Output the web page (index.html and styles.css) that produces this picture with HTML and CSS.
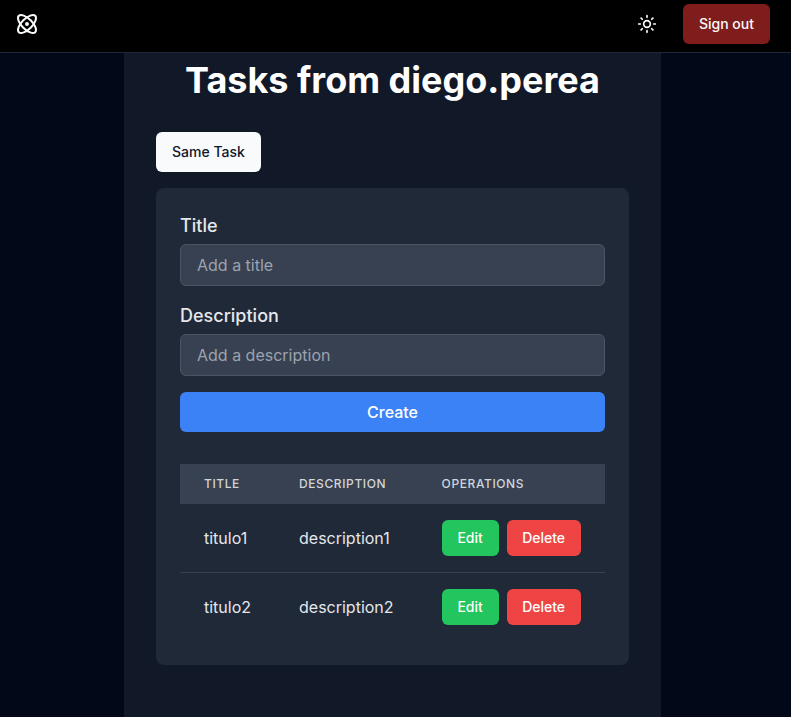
FILE: index.html
```html
<!DOCTYPE html>
<html lang="en">
<head>
<meta charset="utf-8">
<title>Tasks</title>
<link rel="stylesheet" href="styles.css">
</head>
<body>
<header class="topbar">
  <svg class="logo" viewBox="0 0 24 24"><circle cx="12" cy="12" r="1"/><path d="M20.2 20.2c2.04-2.03.02-7.36-4.5-11.9-4.54-4.52-9.87-6.54-11.9-4.5-2.04 2.03-.02 7.36 4.5 11.9 4.54 4.52 9.87 6.54 11.9 4.5Z"/><path d="M15.7 15.7c4.52-4.54 6.54-9.87 4.5-11.9-2.03-2.04-7.36-.02-11.9 4.5-4.52 4.54-6.54 9.87-4.5 11.9 2.03 2.04 7.36.02 11.9-4.5Z"/></svg>
  <div class="actions">
    <button class="theme" aria-label="Theme"><svg viewBox="0 0 24 24"><circle cx="12" cy="12" r="4"/><path d="M12 2v2M12 20v2M4.93 4.93l1.41 1.41M17.66 17.66l1.41 1.41M2 12h2M20 12h2M6.34 17.66l-1.41 1.41M19.07 4.93l-1.41 1.41"/></svg></button>
    <button class="btn signout">Sign out</button>
  </div>
</header>
<main class="page">
  <h1>Tasks from diego.perea</h1>
  <button class="btn same">Same Task</button>
  <section class="card">
    <form>
      <label for="title">Title</label>
      <input id="title" placeholder="Add a title">
      <label for="description">Description</label>
      <input id="description" placeholder="Add a description">
      <button class="create" type="button">Create</button>
    </form>
    <table>
      <thead><tr><th class="c1">Title</th><th class="c2">Description</th><th>Operations</th></tr></thead>
      <tbody>
        <tr><td>titulo1</td><td>description1</td><td><div class="ops"><button class="edit">Edit</button><button class="delete">Delete</button></div></td></tr>
        <tr><td>titulo2</td><td>description2</td><td><div class="ops"><button class="edit">Edit</button><button class="delete">Delete</button></div></td></tr>
      </tbody>
    </table>
  </section>
</main>
</body>
</html>
```
FILE: styles.css
```css
*{box-sizing:border-box;margin:0;padding:0}
body{height:717px;overflow:hidden;display:flex;flex-direction:column;background:#020817;color:#f8fafc;font:16px/24px Inter,sans-serif}
button{border:0;color:#fff;font:inherit;font-weight:500;border-radius:6px}
svg{display:block;fill:none;stroke:currentColor;stroke-width:2;stroke-linecap:round;stroke-linejoin:round}
.topbar{height:53px;flex:none;display:flex;justify-content:space-between;align-items:flex-start;padding:4px 21px 0 15px;background:#000;border-bottom:1px solid #1e293b}
.logo{width:24px;height:24px;margin-top:8px}
.actions{display:flex;gap:16px}
.theme{width:40px;height:40px;background:none;display:grid;place-items:center}
.theme svg{width:20px;height:20px}
.btn{height:40px;padding:0 16px;font-size:14px;line-height:20px}
.signout{background:#7f1d1d;color:#f8fafc}
.page{flex:1;width:537px;margin-left:124px;padding:7px 32px 0;background:#111827}
h1{font-size:36px;line-height:40px;font-weight:700;text-align:center;color:#fff;margin-bottom:32px}
.same{display:block;background:#f8fafc;color:#0f172a;margin-bottom:16px}
.card{background:#1f2937;border-radius:8px;padding:24px;height:477px}
label{display:block;font-size:18px;line-height:28px;font-weight:500;color:#e5e7eb;margin-bottom:4px}
input{display:block;width:100%;height:42px;padding:8px 16px;border:1px solid #4b5563;border-radius:6px;background:#374151;color:#fff;font:inherit;margin-bottom:16px}
input::placeholder{color:#9ca3af;opacity:1}
.create{display:block;width:100%;height:40px;background:#3b82f6;margin-bottom:32px}
table{width:100%;border-collapse:collapse;table-layout:fixed}
th{height:40px;padding:0 0 0 24px;background:#374151;color:#d1d5db;font-size:12px;line-height:16px;font-weight:500;letter-spacing:.6px;text-transform:uppercase;text-align:left}
.c1{width:95px}
.c2{width:142.6px}
td{height:68px;padding:0 0 0 24px;color:#e5e7eb}
tbody tr+tr td{height:69px;border-top:1px solid #374151}
.ops{display:flex;gap:8px}
.ops button{height:36px;font-size:14px;line-height:20px}
.edit{width:57px;background:#22c55e}
.delete{width:74px;background:#ef4444}
```
